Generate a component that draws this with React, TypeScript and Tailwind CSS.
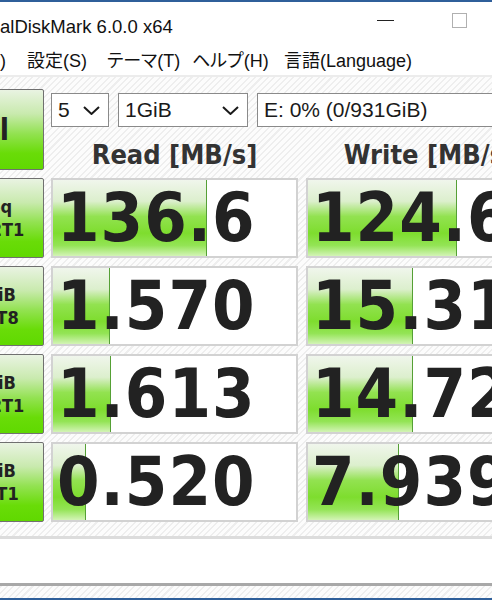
import { useState } from "react";

// Résultats affichés
const resultats = [
  { l1: "Seq", l2: "Q32T1", read: "136.6", write: "124.6", rw: 154, ww: 149 },
  { l1: "4KiB", l2: "Q8T8", read: "1.570", write: "15.31", rw: 57, ww: 105 },
  { l1: "4KiB", l2: "Q32T1", read: "1.613", write: "14.72", rw: 58, ww: 105 },
  { l1: "4KiB", l2: "Q1T1", read: "0.520", write: "7.939", rw: 33, ww: 91 },
];

const menus = [
  { label: ")", w: "w-[27px]" },
  { label: "設定(S)", w: "w-[80px]" },
  { label: "テーマ(T)", w: "w-[85px]" },
  { label: "ヘルプ(H)", w: "w-[92px]" },
  { label: "言語(Language)", w: "w-[160px]" },
];

function Chevron() {
  return (
    <svg width="17" height="9" viewBox="0 0 17 9" className="shrink-0">
      <path d="M1 1 L8.5 8 L16 1" fill="none" stroke="#1a1a1a" strokeWidth="2" />
    </svg>
  );
}

function Select({ value, width, arrow }: { value: string; width: string; arrow: boolean }) {
  return (
    <div className={`${width} h-[34px] shrink-0 flex items-center justify-between pl-[6px] pr-[8px] bg-white border border-[#8a8a8a] text-[21px] text-[#1a1a1a] font-['Liberation_Sans',sans-serif]`}>
      <span>{value}</span>
      {arrow && <Chevron />}
    </div>
  );
}

function Cellule({ valeur, barre }: { valeur: string; barre: number }) {
  return (
    <div className="relative w-[247px] h-[80px] shrink-0 bg-white border-2 border-[#d2d2d2] overflow-hidden flex items-center">
      <div
        className="absolute left-0 top-0 bottom-0 border-r border-[#55a035] bg-[linear-gradient(to_bottom,#f0f6ec_0%,#dcefcd_28%,#92e250_48%,#7edd2e_70%,#93e455_86%,#d3f4b6_100%)]"
        style={{ width: barre }}
      />
      <span className="relative pl-[4px] whitespace-nowrap text-[68px] tracking-[1px] leading-none font-bold text-[#222] font-['DejaVu_Sans_Condensed','DejaVu_Sans',sans-serif] [font-stretch:condensed]">
        {valeur}
      </span>
    </div>
  );
}

function Bouton({ children, className = "" }: { children: React.ReactNode; className?: string }) {
  return (
    <div className={`w-[98px] shrink-0 rounded-[2px] border border-[#707070] bg-[linear-gradient(to_bottom,#e9f3e2_0%,#c9eaae_30%,#93e252_55%,#69dc08_80%,#60d900_100%)] flex flex-col items-center justify-center text-[#222] font-bold font-['DejaVu_Sans_Condensed','DejaVu_Sans',sans-serif] [font-stretch:condensed] ${className}`}>
      {children}
    </div>
  );
}

export default function App() {
  const [donnees] = useState(resultats);

  return (
    <div className="w-[492px] h-[600px] overflow-hidden flex flex-col bg-white font-['Liberation_Sans','Noto_Sans_CJK_JP',sans-serif]">
      {/* Barre de titre */}
      <div className="h-[2px] shrink-0 bg-[#2f5f9a]" />
      <div className="h-[40px] shrink-0 flex items-center">
        <div className="w-[348px] shrink-0 text-[18.5px] text-[#111] mt-[10px]">alDiskMark 6.0.0 x64</div>
        <div className="w-[74px] shrink-0 flex justify-center -mt-[3px]">
          <div className="w-[17px] h-[1px] bg-[#222]" />
        </div>
        <div className="w-[74px] shrink-0 flex justify-center -mt-[3px]">
          <div className="w-[15px] h-[15px] border border-[#b0b0b0]" />
        </div>
      </div>

      {/* Menu */}
      <div className="h-[33px] shrink-0 flex items-center text-[18px] text-[#111] pt-[6px] font-['Liberation_Sans','Noto_Sans_CJK_JP',sans-serif] [font-feature-settings:'palt']">
        {menus.map((m, i) => (
          <span key={i} className={`${m.w} shrink-0 whitespace-nowrap`}>{m.label}</span>
        ))}
      </div>
      <div className="h-[2px] shrink-0 bg-[#ececec]" />

      {/* Zone principale */}
      <div className="flex-1 flex flex-col bg-[repeating-linear-gradient(135deg,#eeeeee_0px,#eeeeee_1.5px,#fcfcfc_1.5px,#fcfcfc_4.5px)]">
        <div className="ml-[-54px] pt-[12px] flex">
          <Bouton className="h-[81px] items-end pr-[34px]">
            <span className="text-[30px] leading-none">All</span>
          </Bouton>
          <div className="ml-[7px] flex flex-col">
            <div className="mt-[4px] flex gap-[9px]">
              <Select value="5" width="w-[58px]" arrow />
              <Select value="1GiB" width="w-[130px]" arrow />
              <Select value="E: 0% (0/931GiB)" width="w-[296px]" arrow={false} />
            </div>
            <div className="flex mt-[14px]">
              <div className="w-[247px] text-center text-[27px] leading-none font-bold text-[#333] font-['DejaVu_Sans_Condensed','DejaVu_Sans',sans-serif] [font-stretch:condensed]">
                Read [MB/s]
              </div>
              <div className="ml-[8px] w-[247px] text-center text-[27px] leading-none font-bold text-[#333] font-['DejaVu_Sans_Condensed','DejaVu_Sans',sans-serif] [font-stretch:condensed]">
                Write [MB/s]
              </div>
            </div>
          </div>
        </div>

        {donnees.map((r, i) => (
          <div key={i} className="ml-[-54px] mt-[8px] flex">
            <Bouton className="h-[80px] text-[18px] leading-[23px]">
              <span>{r.l1}</span>
              <span>{r.l2}</span>
            </Bouton>
            <div className="ml-[7px]">
              <Cellule valeur={r.read} barre={r.rw} />
            </div>
            <div className="ml-[8px]">
              <Cellule valeur={r.write} barre={r.ww} />
            </div>
          </div>
        ))}

        {/* Commentaire */}
        <div className="mt-[14px] h-[3px] bg-[#dcdcdc]" />
        <div className="h-[44px] bg-white" />
        <div className="h-[3px] bg-[#a8a8a8]" />
        <div className="flex-1" />
      </div>
      <div className="h-[2px] shrink-0 bg-[#2f5f9a]" />
    </div>
  );
}
